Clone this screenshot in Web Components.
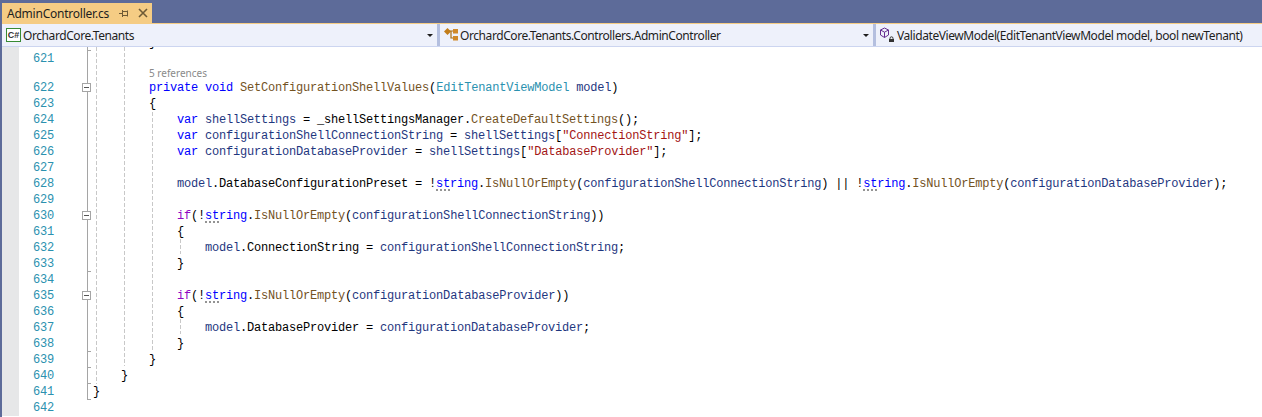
<!DOCTYPE html>
<html>
<head>
<meta charset="utf-8">
<title>AdminController.cs</title>
<style>
  html, body { margin: 0; padding: 0; background: #fff; overflow: hidden; }
  vs-editor { height: 417px; }
</style>
</head>
<body>
<vs-editor>
  <vs-tab slot="tabs" label="AdminController.cs"></vs-tab>
  <nav-combo slot="nav" icon="cs" width="438">OrchardCore.Tenants</nav-combo>
  <nav-combo slot="nav" icon="class" width="436" pad="3">OrchardCore.Tenants.Controllers.AdminController</nav-combo>
  <nav-combo slot="nav" icon="method" last>ValidateViewModel(EditTenantViewModel model, bool newTenant)</nav-combo>
  <code-view slot="code">
    <code-line fold="end" indent="8">}</code-line>
    <code-line n="621" fold="line"></code-line>
    <code-line n="622" fold="open" indent="8" lens="5 references"><span class="k">private</span> <span class="k">void</span> <span class="m">SetConfigurationShellValues</span>(<span class="t">EditTenantViewModel</span> <span class="v">model</span>)</code-line>
    <code-line n="623" fold="line" indent="8">{</code-line>
    <code-line n="624" fold="line" indent="12"><span class="k">var</span> <span class="v">shellSettings</span> = _shellSettingsManager.<span class="m">CreateDefaultSettings</span>();</code-line>
    <code-line n="625" fold="line" indent="12"><span class="k">var</span> <span class="v">configurationShellConnectionString</span> = <span class="v">shellSettings</span>[<span class="s">"ConnectionString"</span>];</code-line>
    <code-line n="626" fold="line" indent="12"><span class="k">var</span> <span class="v">configurationDatabaseProvider</span> = <span class="v">shellSettings</span>[<span class="s">"DatabaseProvider"</span>];</code-line>
    <code-line n="627" fold="line"></code-line>
    <code-line n="628" fold="line" indent="12"><span class="v">model</span>.DatabaseConfigurationPreset = !<span class="k hint">st</span><span class="k">ring</span>.<span class="m">IsNullOrEmpty</span>(<span class="v">configurationShellConnectionString</span>) || !<span class="k hint">st</span><span class="k">ring</span>.<span class="m">IsNullOrEmpty</span>(<span class="v">configurationDatabaseProvider</span>);</code-line>
    <code-line n="629" fold="line"></code-line>
    <code-line n="630" fold="open" indent="12"><span class="c">if</span>(!<span class="k hint">st</span><span class="k">ring</span>.<span class="m">IsNullOrEmpty</span>(<span class="v">configurationShellConnectionString</span>))</code-line>
    <code-line n="631" fold="line" indent="12">{</code-line>
    <code-line n="632" fold="line" indent="16"><span class="v">model</span>.ConnectionString = <span class="v">configurationShellConnectionString</span>;</code-line>
    <code-line n="633" fold="end" indent="12">}</code-line>
    <code-line n="634" fold="line"></code-line>
    <code-line n="635" fold="open" indent="12"><span class="c">if</span>(!<span class="k hint">st</span><span class="k">ring</span>.<span class="m">IsNullOrEmpty</span>(<span class="v">configurationDatabaseProvider</span>))</code-line>
    <code-line n="636" fold="line" indent="12">{</code-line>
    <code-line n="637" fold="line" indent="16"><span class="v">model</span>.DatabaseProvider = <span class="v">configurationDatabaseProvider</span>;</code-line>
    <code-line n="638" fold="end" indent="12">}</code-line>
    <code-line n="639" fold="end" indent="8">}</code-line>
    <code-line n="640" fold="end" indent="4">}</code-line>
    <code-line n="641" fold="end" indent="0">}</code-line>
    <code-line n="642"></code-line>
  </code-view>
</vs-editor>

<script>
class VsEditor extends HTMLElement {
    constructor() {
        super();
        this.attachShadow({ mode: 'open' });
        this.shadowRoot.innerHTML = `
            <style>
                :host { display: flex; flex-direction: column; background: #5d6b99; padding-left: 2px; box-sizing: border-box; overflow: hidden; }
                .tabs { display: flex; height: 20px; padding-top: 3px; flex: none; }
                .stripe { height: 1px; background: #f5cc84; flex: none; }
                .nav { display: flex; height: 22px; flex: none; background: #eef1fb; border-bottom: 1px solid #ccd5f0; }
                .code { flex: 1; min-height: 0; background: #fff; overflow: hidden; }
            </style>
            <div class="tabs"><slot name="tabs"></slot></div>
            <div class="stripe"></div>
            <div class="nav"><slot name="nav"></slot></div>
            <div class="code"><slot name="code"></slot></div>
        `;
    }
}

class VsTab extends HTMLElement {
    constructor() {
        super();
        this.attachShadow({ mode: 'open' });
        this.shadowRoot.innerHTML = `
            <style>
                :host { display: flex; align-items: center; width: 150px; height: 20px; background: #f5cc84; color: #1e1e1e; font: 12px "Noto Sans", sans-serif; letter-spacing: -0.23px; box-sizing: border-box; padding-left: 5px; }
                .label { width: 112px; white-space: pre; }
                svg { display: block; flex: none; }
                .close { margin-left: 9px; }
            </style>
            <span class="label"></span>
            <svg width="10" height="10" viewBox="0 0 10 10" fill="none" stroke="#6e5a36"><path d="M0 5.5h3.5M3.5 2v7M3.5 3.5h5v4h-5M8.5 2.5v6"/></svg>
            <svg class="close" width="10" height="10" viewBox="0 0 10 10" fill="none" stroke="#6e5a36" stroke-width="1.6"><path d="M1 1l8 8M9 1l-8 8"/></svg>
        `;
        this.shadowRoot.querySelector('.label').textContent = this.getAttribute('label');
    }
}

const NAV_ICONS = {
    cs: `<span class="cs">C#</span>`,
    class: `<svg width="16" height="16" viewBox="0 0 16 16"><path d="M5 4h7M8 4v7h4" fill="none" stroke="#a86d12" stroke-width="1.2"/><path d="M4.5 1l3.5 3.5-3.5 3.5-3.5-3.5z" fill="#c27d1a"/><rect x="10" y="2" width="5" height="4.5" fill="#d0892a"/><rect x="10" y="9" width="5" height="4.5" fill="#d0892a"/></svg>`,
    method: `<svg width="16" height="16" viewBox="0 0 16 16"><path d="M4.5 1l4 2v5l-4 2.5-4-2.5v-5z M.5 3l4 2.2 4-2.2 M4.5 5.2v5.3" fill="none" stroke="#652d90"/><rect x="9" y="12" width="5" height="3" fill="#333"/><path d="M10 12v-.7a1.5 1.5 0 0 1 3 0v.7" fill="none" stroke="#333"/></svg>`
};

class NavCombo extends HTMLElement {
    constructor() {
        super();
        this.attachShadow({ mode: 'open' });
        const last = this.hasAttribute('last');
        const width = this.getAttribute('width');
        const pad = this.getAttribute('pad') || 4;
        this.shadowRoot.innerHTML = `
            <style>
                :host { display: flex; align-items: center; height: 22px; box-sizing: border-box; font: 12px "Noto Sans", sans-serif; letter-spacing: -0.42px; color: #1e1e1e; white-space: pre; padding-left: ${pad}px; flex: ${width ? 'none' : '1'}; width: ${width ? width + 'px' : 'auto'}; min-width: 0; border-right: ${last ? '0' : '3px solid #b4bfdf'}; }
                .ico { width: 16px; height: 16px; flex: none; margin-right: 1px; display: flex; align-items: center; }
                .cs { box-sizing: border-box; width: 15px; height: 14px; border: 1px solid #388a34; background: #fff; font: bold 9px "Liberation Sans", sans-serif; letter-spacing: 0; color: #333; text-align: center; line-height: 12px; }
                .text { flex: 1; min-width: 0; }
                .arrow { flex: none; width: 0; height: 0; border: 3px solid transparent; border-top: 3px solid #1e1e1e; border-bottom: 0; margin-right: 4px; }
            </style>
            <span class="ico">${NAV_ICONS[this.getAttribute('icon')]}</span>
            <span class="text"><slot></slot></span>
            ${last ? '' : '<span class="arrow"></span>'}
        `;
    }
}

class CodeView extends HTMLElement {
    constructor() {
        super();
        this.attachShadow({ mode: 'open' });
        // indent guides run over the lines: [x, top, height] below the nav bar
        const guides = [[94, 0, 337], [122, 0, 319], [150, 65, 238], [178, 192, 15], [178, 272, 15]];
        this.shadowRoot.innerHTML = `
            <style>
                :host { display: block; position: relative; margin-top: -12px; }
                .guide { position: absolute; width: 1px; background: repeating-linear-gradient(to bottom, #c8c8c8 0 4px, transparent 4px 6px); }
            </style>
            <slot></slot>
            ${guides.map(g => `<div class="guide" style="left:${g[0]}px;top:${g[1] + 12}px;height:${g[2]}px"></div>`).join('')}
        `;
    }
}

class CodeLine extends HTMLElement {
    constructor() {
        super();
        this.attachShadow({ mode: 'open' });
        const fold = this.getAttribute('fold') || '';
        const indent = Number(this.getAttribute('indent') || 0);
        const lens = this.getAttribute('lens');
        this.shadowRoot.innerHTML = `
            <style>
                :host { display: grid; grid-template-columns: 17px 35px 28px 11px 1fr; font: 12px/16px "Liberation Mono", monospace; letter-spacing: -0.2px; color: #000; background: #fff; white-space: pre; }
                .margin { background: #e6e7e8; }
                .num { color: #2b91af; text-align: right; align-self: end; height: 16px; }
                .fold { position: relative; }
                .fold.line, .fold.open, .fold.end { background: linear-gradient(#a5a5a5, #a5a5a5) 5px 0 / 1px 100% no-repeat; }
                .fold.end::after { content: ""; position: absolute; left: 5px; bottom: 0; width: 4px; height: 1px; background: #a5a5a5; }
                .fold.open::after { content: ""; position: absolute; left: 0; bottom: 4px; width: 9px; height: 9px; box-sizing: border-box; border: 1px solid #a5a5a5; background: linear-gradient(#555, #555) center / 5px 1px no-repeat #fff; }
                .body { padding-left: ${indent * 7}px; min-width: 0; }
                .lens { font: 10px/12px "Noto Sans", sans-serif; letter-spacing: 0; color: #8a8a8a; height: 13px; }
                .src { height: 16px; }
                ::slotted(.k) { color: #0000ff; }
                ::slotted(.c) { color: #8f08c4; }
                ::slotted(.m) { color: #74531f; }
                ::slotted(.t) { color: #2b91af; }
                ::slotted(.v) { color: #1f377f; }
                ::slotted(.s) { color: #a31515; }
                ::slotted(.hint) { background: radial-gradient(circle at 1px 1px, #8c8c8c 0.7px, transparent 0.8px) 0 100% / 4px 2px repeat-x; }
            </style>
            <div class="margin"></div>
            <div class="num">${this.getAttribute('n') || ''}</div>
            <div></div>
            <div class="fold ${fold}"></div>
            <div class="body">${lens ? `<div class="lens">${lens}</div>` : ''}<div class="src"><slot></slot></div></div>
        `;
    }
}

customElements.define('vs-editor', VsEditor);
customElements.define('vs-tab', VsTab);
customElements.define('nav-combo', NavCombo);
customElements.define('code-view', CodeView);
customElements.define('code-line', CodeLine);
</script>
</body>
</html>
